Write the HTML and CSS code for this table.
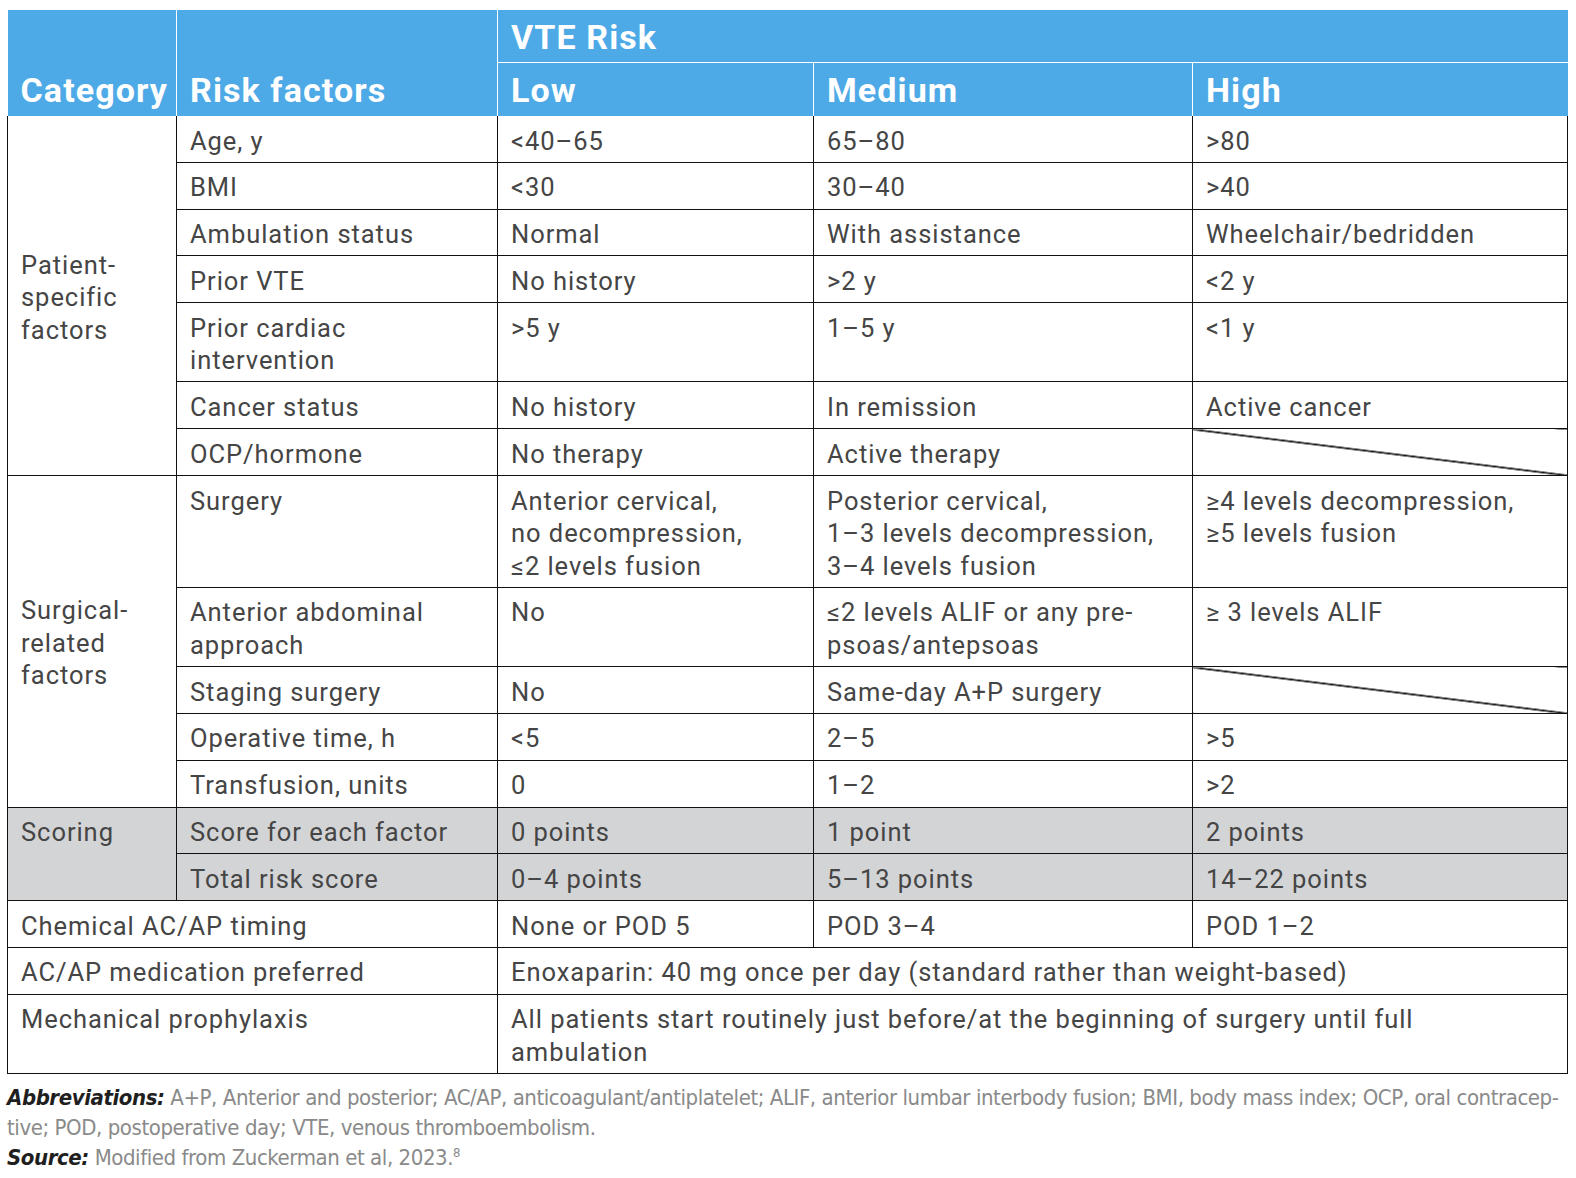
FILE: index.html
```html
<!DOCTYPE html>
<html lang="en">
<head>
<meta charset="utf-8">
<title>VTE Risk</title>
<link rel="stylesheet" href="styles.css">
</head>
<body>
<div class="page">
  <table class="vte">
    <colgroup>
      <col class="c-cat">
      <col class="c-risk">
      <col class="c-low">
      <col class="c-med">
      <col class="c-high">
    </colgroup>
    <thead>
      <tr class="h1">
        <th rowspan="2" class="hcat">Category</th>
        <th rowspan="2" class="hcat">Risk factors</th>
        <th colspan="3" class="htop">VTE Risk</th>
      </tr>
      <tr class="h2">
        <th>Low</th>
        <th>Medium</th>
        <th>High</th>
      </tr>
    </thead>
    <tbody>
      <tr>
        <td rowspan="7" class="cat">Patient-<br>specific<br>factors</td>
        <td>Age, y</td><td>&lt;40–65</td><td>65–80</td><td>&gt;80</td>
      </tr>
      <tr><td>BMI</td><td>&lt;30</td><td>30–40</td><td>&gt;40</td></tr>
      <tr><td>Ambulation status</td><td>Normal</td><td>With assistance</td><td>Wheelchair/bedridden</td></tr>
      <tr><td>Prior VTE</td><td>No history</td><td>&gt;2 y</td><td>&lt;2 y</td></tr>
      <tr><td>Prior cardiac<br>intervention</td><td>&gt;5 y</td><td>1–5 y</td><td>&lt;1 y</td></tr>
      <tr><td>Cancer status</td><td>No history</td><td>In remission</td><td>Active cancer</td></tr>
      <tr><td>OCP/hormone</td><td>No therapy</td><td>Active therapy</td><td class="na"></td></tr>
      <tr>
        <td rowspan="5" class="cat">Surgical-<br>related<br>factors</td>
        <td>Surgery</td>
        <td>Anterior cervical,<br>no decompression,<br>≤2 levels fusion</td>
        <td>Posterior cervical,<br>1–3 levels decompression,<br>3–4 levels fusion</td>
        <td>≥4 levels decompression,<br>≥5 levels fusion</td>
      </tr>
      <tr><td>Anterior abdominal<br>approach</td><td>No</td><td>≤2 levels ALIF or any pre-<br>psoas/antepsoas</td><td>≥ 3 levels ALIF</td></tr>
      <tr><td>Staging surgery</td><td>No</td><td>Same-day A+P surgery</td><td class="na"></td></tr>
      <tr><td>Operative time, h</td><td>&lt;5</td><td>2–5</td><td>&gt;5</td></tr>
      <tr><td>Transfusion, units</td><td>0</td><td>1–2</td><td>&gt;2</td></tr>
      <tr class="score">
        <td rowspan="2" class="cat top">Scoring</td>
        <td>Score for each factor</td><td>0 points</td><td>1 point</td><td>2 points</td>
      </tr>
      <tr class="score"><td>Total risk score</td><td>0–4 points</td><td>5–13 points</td><td>14–22 points</td></tr>
      <tr><td colspan="2">Chemical AC/AP timing</td><td>None or POD 5</td><td>POD 3–4</td><td>POD 1–2</td></tr>
      <tr><td colspan="2">AC/AP medication preferred</td><td colspan="3">Enoxaparin: 40 mg once per day (standard rather than weight-based)</td></tr>
      <tr><td colspan="2">Mechanical prophylaxis</td><td colspan="3">All patients start routinely just before/at the beginning of surgery until full<br>ambulation</td></tr>
    </tbody>
  </table>
  <div class="notes">
    <p class="line"><b>Abbreviations:</b> A+P, Anterior and posterior; AC/AP, anticoagulant/antiplatelet; ALIF, anterior lumbar interbody fusion; BMI, body mass index; OCP, oral contracep-</p>
    <p class="line">tive; POD, postoperative day; VTE, venous thromboembolism.</p>
    <p class="line"><b>Source:</b> Modified from Zuckerman et al, 2023.<sup>8</sup></p>
  </div>
</div>
</body>
</html>
```

FILE: styles.css
```css
html, body {
  margin: 0;
  padding: 0;
  background: #ffffff;
}

.page {
  padding: 10px 0 0 7px;
}

.vte {
  border-collapse: collapse;
  table-layout: fixed;
  width: 1560px;
  font-family: Roboto, "Noto Sans", sans-serif;
  color: #454545;
}

.c-cat { width: 169px; }
.c-risk { width: 321px; }
.c-low { width: 316px; }
.c-med { width: 379px; }
.c-high { width: 375px; }

.vte tr.h1 { height: 52px; }
.vte tr.h2 { height: 54px; }

.vte th {
  background: #4eaae7;
  color: #ffffff;
  font-weight: 700;
  font-size: 34px;
  letter-spacing: 1.1px;
  line-height: 40px;
  text-align: left;
  padding: 0 0 0 13px;
  border: 1px solid #ffffff;
  border-top: 0;
  border-bottom: 0;
}

.vte thead tr.h1 th:first-child { border-left: 0; }
.vte thead th:last-child { border-right: 0; }

.vte th.hcat {
  vertical-align: bottom;
  padding-bottom: 6px;
}

.vte th.htop {
  vertical-align: middle;
  border-bottom: 1px solid #ffffff;
  padding-top: 2px;
}

.vte tr.h2 th {
  vertical-align: bottom;
  padding-bottom: 6px;
}

.vte td {
  font-size: 25.5px;
  letter-spacing: 0.95px;
  line-height: 32.5px;
  padding: 8.5px 6px 4.8px 13px;
  border: 1px solid #111111;
  vertical-align: top;
}

.vte tbody tr:first-child td { border-top: 0; }

.vte td.cat {
  vertical-align: middle;
}

.vte td.cat.top {
  vertical-align: top;
}

.vte tr.score td {
  background: #d3d4d6;
}

.vte td.na {
  background: linear-gradient(to top right,
    transparent calc(50% - 1.2px),
    #111111 calc(50% - 0.5px),
    #111111 calc(50% + 0.5px),
    transparent calc(50% + 1.2px));
}

.notes {
  padding-top: 9px;
  font-family: "Liberation Sans Narrow", "DejaVu Sans Condensed", "Roboto", sans-serif;
  font-stretch: condensed;
  font-size: 22px;
  letter-spacing: -0.43px;
  line-height: 30px;
  color: #8a8a8a;
}

.notes .line {
  margin: 0;
  white-space: nowrap;
}

.notes b {
  color: #1f1f1f;
  font-style: italic;
  font-weight: 700;
}

.notes sup {
  font-size: 13px;
  line-height: 0;
}
```
